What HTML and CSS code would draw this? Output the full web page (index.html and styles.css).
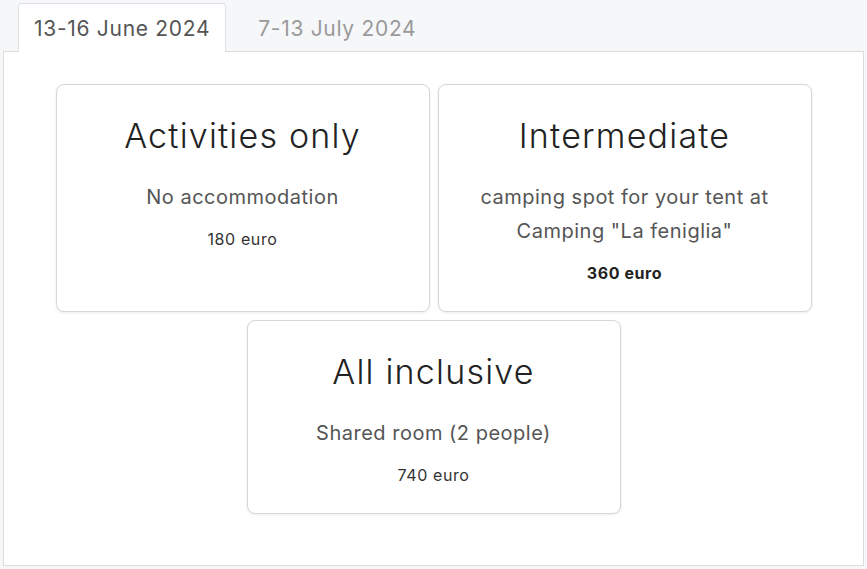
FILE: index.html
```html
<!DOCTYPE html>
<html>
<head>
<meta charset="utf-8">
<link rel="stylesheet" href="styles.css">
</head>
<body>
<div class="tabs">
  <div class="tab active">13-16 June 2024</div>
  <div class="tab">7-13 July 2024</div>
</div>
<div class="panel">
  <div class="cards">
    <div class="card">
      <h2 class="title">Activities only</h2>
      <p class="desc">No accommodation</p>
      <p class="price">180 euro</p>
    </div>
    <div class="card">
      <h2 class="title">Intermediate</h2>
      <p class="desc">camping spot for your tent at Camping "La feniglia"</p>
      <p class="price strong">360 euro</p>
    </div>
    <div class="card">
      <h2 class="title">All inclusive</h2>
      <p class="desc">Shared room (2 people)</p>
      <p class="price">740 euro</p>
    </div>
  </div>
</div>
</body>
</html>
```
FILE: styles.css
```css
html, body {
  margin: 0;
  padding: 0;
  background: #f6f7f9;
  font-family: Inter, "Open Sans", sans-serif;
}
body {
  padding: 3px 3px 0 3px;
  width: 861px;
}
.tabs {
  display: flex;
  padding-left: 15px;
  height: 49px;
  position: relative;
  z-index: 1;
}
.tab {
  box-sizing: border-box;
  height: 49px;
  padding: 0 15px;
  margin-right: 16px;
  display: flex;
  align-items: center;
  font-size: 21px;
  letter-spacing: 0.7px;
  color: #9a9a9a;
  border: 1px solid transparent;
  border-bottom: none;
  border-radius: 4px 4px 0 0;
}
.tab.active {
  background: #fff;
  color: #555;
  border-color: #dee2e6;
}
.panel {
  background: #fff;
  border: 1px solid #dcdcdc;
  margin-top: -1px;
  height: 515px;
  box-sizing: border-box;
  padding-top: 32px;
}
.cards {
  display: flex;
  flex-wrap: wrap;
  justify-content: center;
  gap: 8px 8px;
}
.card {
  box-sizing: border-box;
  width: 374px;
  border: 1px solid #d6d6d6;
  border-radius: 8px;
  box-shadow: 0 1px 3px rgba(0,0,0,0.08);
  padding: 30px 24px 27px;
  text-align: center;
  background: #fff;
}
.title {
  margin: 0;
  font-size: 34px;
  font-weight: 300;
  line-height: 42px;
  letter-spacing: 1.2px;
  color: #222;
}
.desc {
  margin: 23px 0 0;
  font-size: 20px;
  line-height: 34px;
  letter-spacing: 0.5px;
  color: #555;
}
.price {
  margin: 14px 0 0;
  font-size: 16px;
  line-height: 22px;
  letter-spacing: 0.6px;
  color: #333;
}
.price.strong {
  font-weight: 700;
  color: #222;
}
```
